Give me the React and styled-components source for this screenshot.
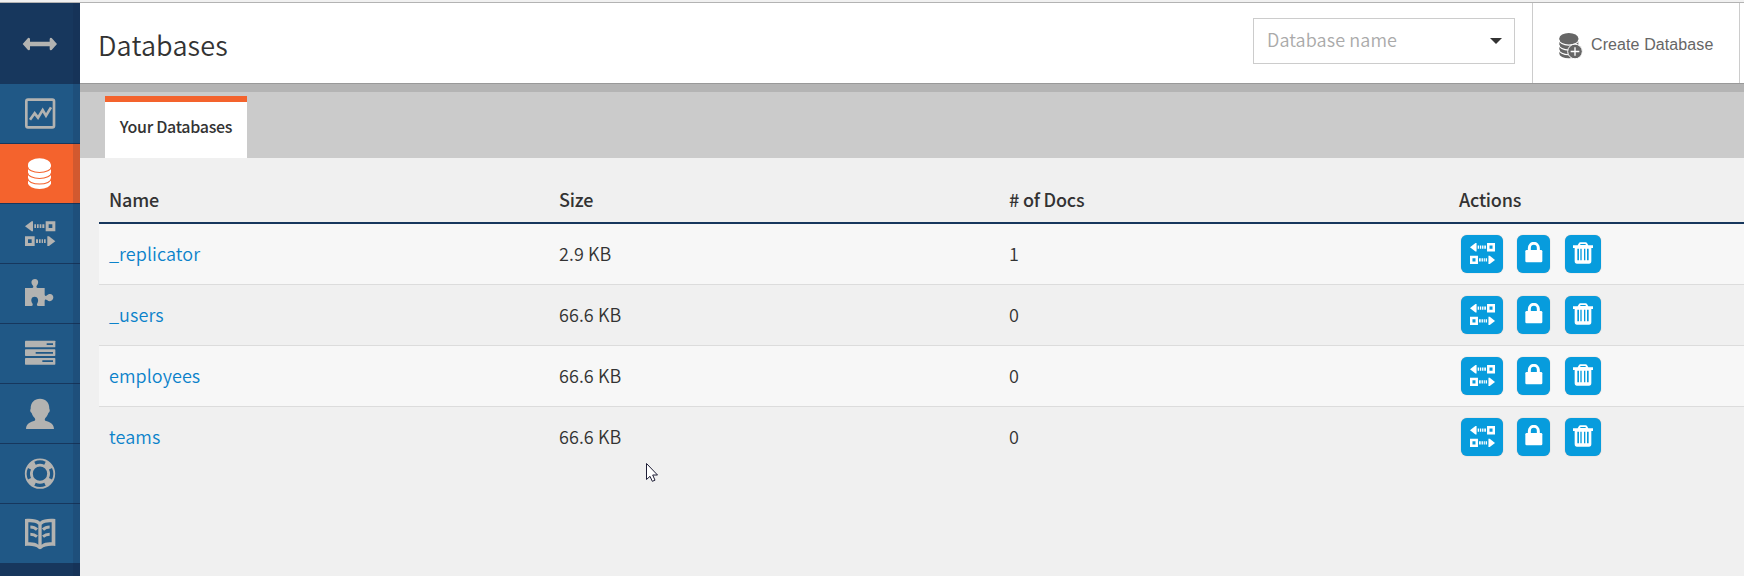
import React from 'react';
import styled, { createGlobalStyle } from 'styled-components';

const sans = '"Source Sans Pro", "Noto Sans CJK JP", "Noto Sans", sans-serif';

const GlobalStyle = createGlobalStyle`
  *, *::before, *::after { box-sizing: border-box; }
  body { margin: 0; background: #f0f0f0; overflow: hidden; }
`;

const Page = styled.div`
  position: relative;
  display: flex;
  flex-direction: column;
  height: 576px;
  overflow: hidden;
  font-family: ${sans};
  color: #333;
  background: #f0f0f0;
`;

const TopEdge = styled.div`
  flex: none;
  height: 3px;
  background: #f1f1f1;
  border-bottom: 1px solid #b3b3b3;
`;

const Shell = styled.div`
  flex: 1;
  display: flex;
  min-height: 0;
`;

const Sidebar = styled.nav`
  position: relative;
  flex: none;
  width: 80px;
  background: #17375d;
  &::after {
    content: '';
    position: absolute;
    top: 0;
    right: 0;
    bottom: 0;
    width: 7px;
    background: rgba(22, 34, 60, 0.15);
  }
`;

const Toggle = styled.div`
  display: flex;
  justify-content: center;
  height: 81px;
  padding-top: 21px;
`;

const NavItem = styled.a`
  display: flex;
  justify-content: center;
  height: 60px;
  padding-top: 10px;
  border-bottom: 1px solid #17375d;
  background: ${(p) => (p.$active ? '#f4632d' : '#205886')};
  color: ${(p) => (p.$active ? '#fff' : '#b3b3b1')};
  --hole: ${(p) => (p.$active ? '#f4632d' : '#205886')};
`;

const NavSvg = styled.svg`
  width: 40px;
  height: 40px;
`;

const Main = styled.main`
  flex: 1;
  min-width: 0;
  display: flex;
  flex-direction: column;
`;

const Header = styled.header`
  flex: none;
  display: flex;
  height: 81px;
  background: #fff;
  border-bottom: 1px solid #999;
`;

const Title = styled.h1`
  flex: 1;
  margin: 0;
  padding: 0 0 0 18px;
  font-size: 27px;
  font-weight: 350;
  line-height: 83px;
  letter-spacing: 0.15px;
`;

const Search = styled.div`
  display: flex;
  align-items: center;
  justify-content: space-between;
  width: 262px;
  height: 46px;
  margin: 15px 17px 0 0;
  padding: 0 12px 4px 13px;
  border: 1px solid #ccc;
  color: #aaa;
  font-size: 18px;
  font-weight: 350;
  line-height: 40px;
  letter-spacing: 0.1px;
`;

const Caret = styled.span`
  margin-top: 4px;
  border: 6px solid transparent;
  border-top-color: #333;
  border-bottom: 0;
`;

const CreateButton = styled.div`
  display: flex;
  align-items: center;
  width: 208px;
  margin-right: 4px;
  padding: 4px 0 0 25px;
  border: solid #ccc;
  border-width: 0 1px;
  color: #666;
  font: 16px/20px "Liberation Sans", Arial, sans-serif;
  letter-spacing: 0.1px;
  white-space: nowrap;
  svg { flex: none; width: 26px; height: 28px; margin: 2px 7px 0 0; }
`;

const TabBar = styled.div`
  flex: none;
  display: flex;
  align-items: flex-end;
  height: 74px;
  padding-left: 25px;
  background: #cbcbcb;
  border-top: 8px solid #b4b4b4;
`;

const Tab = styled.div`
  width: 142px;
  height: 62px;
  border-top: 6px solid #f4632d;
  background: #fff;
  font-size: 16px;
  font-weight: 500;
  line-height: 49px;
  letter-spacing: -0.3px;
  text-align: center;
  white-space: nowrap;
`;

const Table = styled.div`
  margin-left: 19px;
  font-size: 18px;
`;

const Row = styled.div`
  display: grid;
  grid-template-columns: 450px 450px 450px 1fr;
  height: 61px;
  background: ${(p) => (p.$striped ? '#f7f7f7' : '#f0f0f0')};
  border-bottom: 1px solid #dcdcdc;
  &:last-child { border-bottom-color: transparent; }
`;

const HeadRow = styled(Row)`
  height: 66px;
  border-bottom: 2px solid #17375d;
`;

const Cell = styled.div`
  padding-left: 10px;
  line-height: 59px;
  font-weight: 350;
  letter-spacing: 0.08px;
  white-space: nowrap;
`;

const HeadCell = styled(Cell)`
  font-weight: 500;
  line-height: 82px;
  letter-spacing: -0.2px;
`;

const DbLink = styled.a`
  color: #0b82ca;
`;

const Actions = styled.div`
  display: flex;
  padding: 11px 0 0 12px;
`;

const ActionButton = styled.button`
  display: flex;
  justify-content: center;
  width: ${(p) => p.$width}px;
  height: 38px;
  margin: 0 ${(p) => p.$gap || 0}px 0 0;
  padding: ${(p) => p.$top || 7}px 0 0;
  border: 0;
  border-radius: 6px;
  background: #079cdd;
  box-shadow: 0 0 1px rgba(0, 0, 0, 0.35);
  color: #fff;
  --hole: #079cdd;
  svg { flex: none; display: block; }
`;

const Pointer = styled.svg`
  position: absolute;
  left: 645px;
  top: 462px;
  width: 14px;
  height: 21px;
`;

const NavIcon = ({ children }) => (
  <NavSvg viewBox="60 30 120 120" fill="currentColor">{children}</NavSvg>
);

const ReplicationShape = () => (
  <g fill="currentColor">
    <path d="M75 67 L95 52 H99 V82 H95 Z" />
    <path d="M103 61h5v11h-5z M111 61h5v11h-5z M119 61h5v11h-5z M127 61h6v11h-6z" />
    <path fillRule="evenodd" d="M137 52h29v30h-29z M146 61v11h11v-11z" />
    <path fillRule="evenodd" d="M75 97h29v29h-29z M84 106v11h11v-11z" />
    <path d="M108 106h6v11h-6z M117 106h5v11h-5z M125 106h4v11h-4z M132 106h5v11h-5z" />
    <path d="M166 112 L147 126 H142 V97 H147 Z" />
  </g>
);

const ChartIcon = () => (
  <NavIcon>
    <rect x="79" y="47" width="83" height="83" rx="5" fill="none" stroke="currentColor" strokeWidth="8" />
    <path d="M90 107 L104 88 L114 101 L128 78 L138 95 L153 70" fill="none" stroke="currentColor" strokeWidth="8" />
  </NavIcon>
);

const DatabaseIcon = () => (
  <NavIcon>
    <path d="M84 62 A34.5 19 0 0 1 153 62 V118 A34.5 17 0 0 1 84 118 Z" />
    <g fill="none" stroke="var(--hole)" strokeWidth="3.2">
      <path d="M83 68 A35 17 0 0 0 154 68" />
      <path d="M83 86 A35 17 0 0 0 154 86" />
      <path d="M83 103 A35 17 0 0 0 154 103" />
    </g>
  </NavIcon>
);

const PuzzleIcon = () => (
  <NavIcon>
    <path d="M75 72 H96 C101 72 101 68 98 64 C91 55 95 45 105 45 C114 45 118 55 111 64 C108 68 109 72 113 72 H134 V91 C134 97 138 97 141 94 C149 86 160 90 160 100 C160 111 149 115 141 108 C137 105 134 106 134 111 V126 H115 C110 126 110 122 112 118 C117 109 114 98 104 98 C94 98 91 109 97 118 C99 122 99 126 94 126 H75 Z" />
  </NavIcon>
);

const ServerIcon = () => (
  <NavIcon>
    <rect x="75" y="50" width="91" height="20" rx="2" />
    <rect x="75" y="76" width="91" height="20" rx="2" />
    <rect x="75" y="102" width="91" height="20" rx="2" />
    <path fill="var(--hole)" d="M140 58h19v5h-19z M107 84h52v5h-52z M127 109h32v5h-32z" />
  </NavIcon>
);

const UserIcon = () => (
  <NavIcon>
    <path d="M78 135 C79 117 91 114 104 110 C107 108 106 104 102 100 C98 95 96 91 95 87 C91 85 89 78 92 74 C92 55 103 44 120 44 C137 44 148 55 148 74 C151 78 149 85 145 87 C144 91 142 95 138 100 C134 104 133 108 136 110 C149 114 161 117 162 135 Z" />
  </NavIcon>
);

const HelpIcon = () => (
  <NavIcon>
    <circle cx="120" cy="89" r="33.5" fill="none" stroke="currentColor" strokeWidth="24" />
    <g fill="none" stroke="var(--hole)" strokeWidth="10">
      <path d="M105 57.5 A35 35 0 0 1 135 57.5" />
      <path d="M105 120.5 A35 35 0 0 0 135 120.5" />
      <path d="M88.5 74 A35 35 0 0 0 88.5 104" />
      <path d="M151.5 74 A35 35 0 0 1 151.5 104" />
    </g>
  </NavIcon>
);

const BookIcon = () => (
  <NavIcon>
    <path d="M75 45 C94 43 111 45 120 53 C129 45 147 43 166 45 V126 C148 124 133 126 124 134 L120 136 L116 134 C108 126 93 124 75 126 Z" />
    <path fill="var(--hole)" d="M85 55 C97 54 108 56 115 62 V122 C107 116 97 114 85 115 Z M155 55 C143 54 132 56 125 62 V122 C133 116 143 114 155 115 Z" />
    <g fill="none" stroke="currentColor" strokeWidth="9">
      <path d="M91 69 Q103 69 111 77" />
      <path d="M91 91 Q103 91 111 98" />
      <path d="M149 69 Q137 69 129 77" />
      <path d="M149 91 Q137 91 129 98" />
    </g>
  </NavIcon>
);

const LockIcon = () => (
  <svg width="18" height="21" viewBox="0 0 54 63">
    <path d="M13 28 V18 A13.500 14 0 0 1 40 18 V28" fill="none" stroke="currentColor" strokeWidth="9" />
    <rect x="1" y="24" width="51" height="37" rx="4" fill="currentColor" />
  </svg>
);

const TrashIcon = () => (
  <svg width="20" height="22" viewBox="0 0 60 66">
    <path d="M0 10 H14 L18 3 Q19 1 22 1 H38 Q41 1 42 3 L46 10 H60 V18 H55 V57 Q55 65 48 65 H12 Q5 65 5 57 V18 H0 Z" fill="currentColor" />
    <path d="M21 9 L23 6 H37 L39 9 Z M13 20h5v35h-5z M22 20h4v35h-4z M33 20h4v35h-4z M42 20h5v35h-5z" fill="var(--hole)" />
  </svg>
);

const AddDatabaseIcon = () => (
  <svg viewBox="985 98 78 84">
    <path d="M989 117 A28.500 16 0 0 1 1046 117 V163 A28.500 14 0 0 1 989 163 Z" fill="#666" />
    <g fill="none" stroke="#fff" strokeWidth="3.500">
      <path d="M988 122 A29 15 0 0 0 1047 122" />
      <path d="M988 137 A29 15 0 0 0 1047 137" />
      <path d="M988 151 A29 15 0 0 0 1047 151" />
    </g>
    <circle cx="1036" cy="156.500" r="22" fill="#666" stroke="#fff" strokeWidth="3" />
    <path d="M1023 156.500 H1049 M1036 143.500 V169.500" stroke="#fff" strokeWidth="4" />
  </svg>
);

const navItems = [
  { name: 'activity', Icon: ChartIcon },
  { name: 'databases', Icon: DatabaseIcon, active: true },
  { name: 'replication', Icon: () => <NavIcon><ReplicationShape /></NavIcon> },
  { name: 'plugins', Icon: PuzzleIcon },
  { name: 'config', Icon: ServerIcon },
  { name: 'account', Icon: UserIcon },
  { name: 'help', Icon: HelpIcon },
  { name: 'docs', Icon: BookIcon },
];

const databases = [
  { name: '_replicator', size: '2.9 KB', docs: 1 },
  { name: '_users', size: '66.6 KB', docs: 0 },
  { name: 'employees', size: '66.6 KB', docs: 0 },
  { name: 'teams', size: '66.6 KB', docs: 0 },
];

export default function App() {
  return (
    <Page>
      <GlobalStyle />
      <TopEdge />
      <Shell>
        <Sidebar>
          <Toggle>
            <svg width="40" height="40" viewBox="60 72 120 120" fill="#b3b3b1">
              <path d="M68 132 L84 114 Q90 112 90 118 V125 H149 V118 Q149 112 155 114 L171 132 L155 150 Q149 152 149 146 V139 H90 V146 Q90 152 84 150 Z" />
            </svg>
          </Toggle>
          {navItems.map(({ name, Icon, active }) => (
            <NavItem key={name} $active={active}><Icon /></NavItem>
          ))}
        </Sidebar>
        <Main>
          <Header>
            <Title>Databases</Title>
            <Search>Database name<Caret /></Search>
            <CreateButton><AddDatabaseIcon />Create Database</CreateButton>
          </Header>
          <TabBar><Tab>Your Databases</Tab></TabBar>
          <Table>
            <HeadRow>
              <HeadCell>Name</HeadCell>
              <HeadCell>Size</HeadCell>
              <HeadCell># of Docs</HeadCell>
              <HeadCell>Actions</HeadCell>
            </HeadRow>
            {databases.map((db, i) => (
              <Row key={db.name} $striped={i % 2 === 0}>
                <Cell><DbLink>{db.name}</DbLink></Cell>
                <Cell>{db.size}</Cell>
                <Cell>{db.docs}</Cell>
                <Actions>
                  <ActionButton $width={42} $gap={14} $top={8}>
                    <svg width="25" height="21" viewBox="75 52 91 74" preserveAspectRatio="none"><ReplicationShape /></svg>
                  </ActionButton>
                  <ActionButton $width={33} $gap={15}><LockIcon /></ActionButton>
                  <ActionButton $width={36}><TrashIcon /></ActionButton>
                </Actions>
              </Row>
            ))}
          </Table>
        </Main>
      </Shell>
      <Pointer viewBox="0 0 14 21">
        <path d="M1.500 1.500 V17.500 L5 14.300 L7.300 19.300 L10 18.200 L7.700 13 H12.500 Z" fill="#fff" stroke="#1d1d35" strokeWidth="1" />
      </Pointer>
    </Page>
  );
}
